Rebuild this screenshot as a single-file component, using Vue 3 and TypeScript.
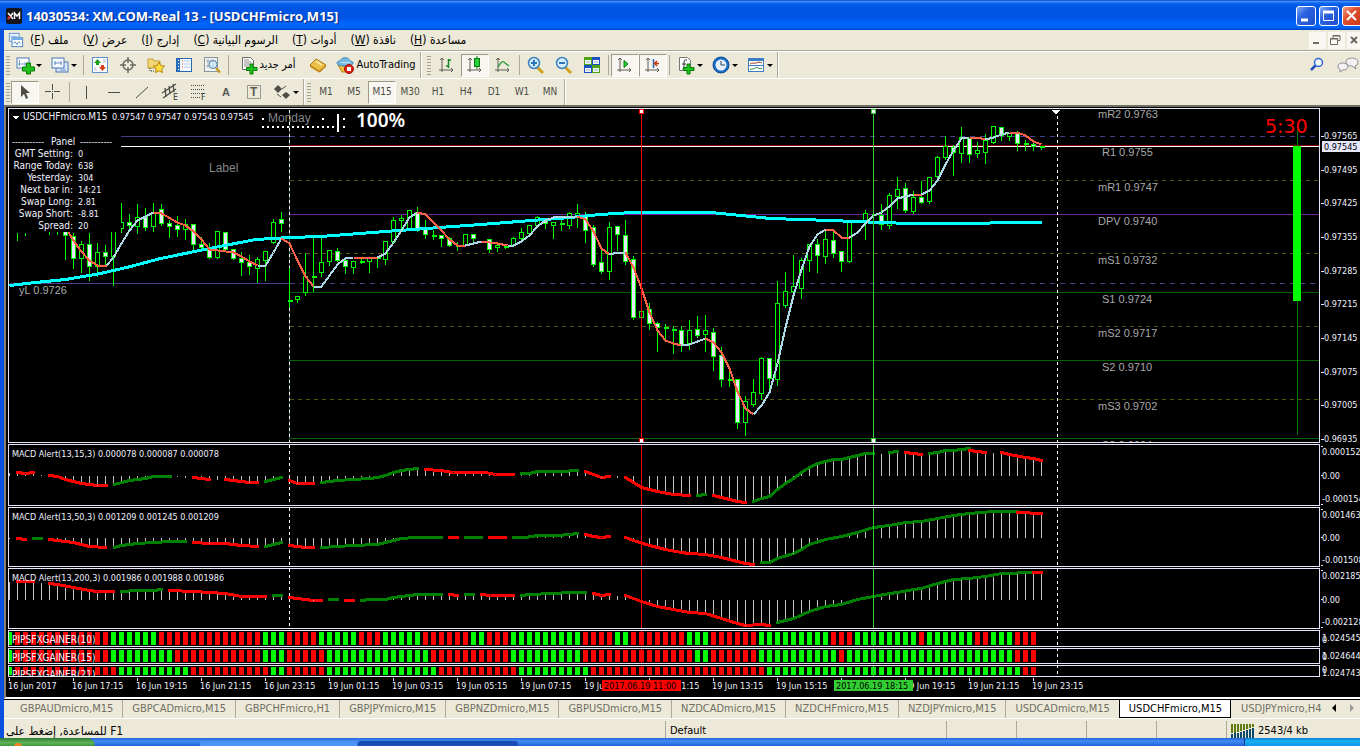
<script setup lang="ts">
import { ref } from 'vue'

type Point = [number, number]
type Seg = { c: string; p: Point[] }

const icons: Record<string, string> = {
  newChart: '<rect x="1" y="2" width="12" height="10" fill="#fff" stroke="#4a78b5"/><path d="M3.500 4v6M2 8h9M9 6v4" stroke="#7c9cc8" fill="none"/><path d="M10.500 7h4v4h4v4h-4v3h-4v-3h-4v-4h4z" fill="#1ec31e" stroke="#087a08"/>',
  profiles: '<rect x="5" y="6" width="12" height="10" fill="#dbe8f8" stroke="#4a78b5"/><rect x="1" y="2" width="12" height="10" fill="#f4f8ff" stroke="#4a78b5"/><path d="M3 7h8M4 5v4M10 5v4M15 14h-6" stroke="#6a8fc4" fill="none"/>',
  market: '<rect x="1.500" y="1.500" width="15" height="15" fill="#fff" stroke="#5a92d0"/><path d="M6.500 3l3.500 4H8v2H5V7H3z" fill="#16a016"/><path d="M11.500 15L8 11h2V9h3v2h2z" fill="#d8411c"/><path d="M3 12h2M3 14h3M12 4h3M12 6h3" stroke="#b0b8c8"/>',
  target: '<circle cx="9" cy="9" r="5" fill="none" stroke="#6b6b63" stroke-width="1.500"/><path d="M9 1v6M9 11v6M1 9h6M11 9h6" stroke="#6b6b63" stroke-width="1.500"/>',
  folder: '<path d="M1 3h5l1 2h6v7H1z" fill="#f3d777" stroke="#c39a33"/><path d="M3 12v3h4" fill="none" stroke="#333" stroke-dasharray="1 1"/><path d="M12 6l1.700 3.600 4 .4-3 2.700.9 4-3.600-2-3.600 2 .9-4-3-2.700 4-.4z" fill="#ffdf3d" stroke="#b78410"/>',
  navigator: '<rect x="1.500" y="2.500" width="15" height="13" fill="#f5f9ff" stroke="#2668b8"/><path d="M2 3h3v12H2z" fill="#2a6cc0"/><path d="M3.500 4v10" stroke="#fff" stroke-dasharray="1 2"/><path d="M7 5h1M7 8h1M7 11h1" stroke="#c43"/><path d="M9 5h6M9 8h6M9 11h6" stroke="#b7cde8"/>',
  tester: '<rect x="1.500" y="1.500" width="13" height="14" fill="#f0f2f2" stroke="#88939b"/><path d="M3 5h10M5 3v9M10 3v9M3 10h8" stroke="#9fb2bf"/><circle cx="10" cy="8.500" r="4" fill="#cde8f8" fill-opacity=".8" stroke="#5682a8"/><path d="M13 12l4 4.500" stroke="#c79a1f" stroke-width="2.500"/>',
  order: '<path d="M2.500 1.500h8l3 3v9h-11z" fill="#fff" stroke="#6c6c6c"/><path d="M4 4h5M4 6h7M4 8h7M4 10h5" stroke="#8c8c8c"/><path d="M10 8h3v3.500h4v3h-4V18h-3v-3.500H6.500v-3H10z" fill="#1ec31e" stroke="#087a08"/>',
  gold: '<path d="M1 9l6-6 10 6-6 7z" fill="#edc04a" stroke="#a97511"/><path d="M1 9l9 5.500L17 9v2l-7 5.500L1 11z" fill="#c78b1b"/><path d="M7 5l6 4" stroke="#ffe9a0" stroke-width="2"/>',
  auto: '<path d="M2 9h13l-4 7H6z" fill="#f2c23c" stroke="#b5851c"/><path d="M1 7c0-2 3-1.500 4-3.500S12 1 13 3.500 17 5 17 7s-3 3-8 3-8-1-8-3z" fill="#73b7e2" stroke="#3d82b6"/><path d="M5 6c2 1 6 1 9 0" stroke="#d4edfb" fill="none"/><circle cx="13" cy="13" r="4.500" fill="#dd2216" stroke="#9e130b"/><rect x="11" y="11" width="4" height="4" fill="#fff"/>',
  bars: '<path d="M4 2v14M1 14h14M2 4l2-2 2 2M13 12l2 2-2 2" stroke="#5c5c54" fill="none"/><path d="M10.500 3v9M8 10h3M10 4h3" stroke="#15842a" stroke-width="1.500" fill="none"/>',
  candles: '<path d="M4 2v14M1 14h14M2 4l2-2 2 2M13 12l2 2-2 2" stroke="#5c5c54" fill="none"/><path d="M11 0v13" stroke="#087a08"/><rect x="8.500" y="2.500" width="5" height="8" fill="#27cc3e" stroke="#087a08"/>',
  line: '<path d="M4 2v14M1 14h14M2 4l2-2 2 2M13 12l2 2-2 2" stroke="#5c5c54" fill="none"/><path d="M4 11c3-5 5-7 7-4l4 3" stroke="#239c35" fill="none" stroke-width="1.300"/>',
  zoomIn: '<path d="M10 11l6 6" stroke="#d0a21c" stroke-width="3"/><circle cx="7" cy="7" r="5.500" fill="#d4ecfb" stroke="#3a7fc0" stroke-width="1.500"/><path d="M7 4v6M4 7h6" stroke="#2877bd" stroke-width="2"/>',
  zoomOut: '<path d="M10 11l6 6" stroke="#d0a21c" stroke-width="3"/><circle cx="7" cy="7" r="5.500" fill="#d4ecfb" stroke="#3a7fc0" stroke-width="1.500"/><path d="M4 7h6" stroke="#2877bd" stroke-width="2"/>',
  tile: '<path d="M1 1h8v8H1zM9 9h8v8H9z" fill="#4ba312"/><path d="M9 1h8v8H9zM1 9h8v8H1z" fill="#1c4fc0"/><path d="M2 4h6v4H2zM10 4h6v4h-6zM2 12h6v4H2zM10 12h6v4h-6z" fill="#eef4f8"/><path d="M3 6h4M11 6h4M3 14h4M11 14h4" stroke="#9bbad0"/>',
  scroll: '<path d="M4 2v14M1 14h14M2 4l2-2 2 2M13 12l2 2-2 2" stroke="#5c5c54" fill="none"/><path d="M8 4.500l4 3.500-4 3.500z" fill="#27cc3e" stroke="#087a08"/>',
  shift: '<path d="M4 2v14M1 14h14M2 4l2-2 2 2M13 12l2 2-2 2" stroke="#5c5c54" fill="none"/><path d="M9.500 3v9" stroke="#2466a8" stroke-width="1.500"/><path d="M15 7.500h-4M13 5l-2.500 2.500L13 10" stroke="#c23a12" stroke-width="1.500" fill="none"/>',
  indicator: '<path d="M2.500 1.500h8l3 3v10h-11z" fill="#fff" stroke="#777"/><path d="M10 4H8.500Q7 4 7 6v6q0 1-1.500 1M5 8h4" stroke="#333" fill="none"/><path d="M10 8h3v3.500h4v3h-4V18h-3v-3.500H6.500v-3H10z" fill="#1ec31e" stroke="#087a08"/>',
  clock: '<circle cx="9" cy="9" r="8" fill="#1d6fc8" stroke="#104a94"/><circle cx="9" cy="9" r="5.500" fill="#e4f1fb"/><path d="M9 5v4h4" stroke="#2b3f55" fill="none"/>',
  template: '<rect x="1.500" y="2.500" width="15" height="13" fill="#fff" stroke="#3b7cc3"/><path d="M2 3h14v2H2zM2 9h14v1H2z" fill="#3b7cc3"/><path d="M3 8c2-2 4 0 6-1s4-1 6 0" stroke="#a53a1d" fill="none"/><path d="M3 14c2-2 3 0 5-2s4 2 7 0" stroke="#228a30" fill="none"/>',
  cursor: '<path d="M5 2v12l3-3 2 5 2-1-2-5h4z" fill="#4d4d46"/>',
  cross: '<path d="M8.500 1v6M8.500 10v6M1 8.500h6M10 8.500h6M8 8.500h1" stroke="#4d4d46"/>',
  vline: '<path d="M9.500 3v13" stroke="#4d4d46"/>',
  hline: '<path d="M3 9.500h12" stroke="#4d4d46"/>',
  trend: '<path d="M3 15L15 4" stroke="#4d4d46"/>',
  channel: '<path d="M1 10L15 1M2 15L15 6M4 5l1 9M8 3l1 8M12 1l1 8" stroke="#4d4d46" fill="none" stroke-width="1.300"/><text x="12" y="17" font-size="8" font-family="DejaVu Sans, sans-serif" fill="#333">E</text>',
  fibo: '<path d="M2 2.500h14M2 6.500h14M2 10.500h14M2 14.500h9" stroke="#4d4d46" stroke-dasharray="1 1"/><text x="12" y="17" font-size="8" font-family="DejaVu Sans, sans-serif" fill="#333">F</text>',
  text: '<text x="5" y="13" font-size="11" font-weight="bold" font-family="Liberation Sans, sans-serif" fill="#5b5b54">A</text>',
  label: '<rect x="2.500" y="2.500" width="13" height="13" fill="none" stroke="#4d4d46" stroke-dasharray="1 1"/><text x="5" y="13" font-size="12" font-weight="bold" font-family="Liberation Sans, sans-serif" fill="#5b5b54">T</text>',
  arrows: '<path d="M5 2l4 4-4 4-4-4zM13 9l4 3-4 4-4-4z" fill="#4d4d46"/><path d="M9 6l4-3M4 11l4 3" stroke="#4d4d46"/>',
  chartMenu: '<rect x="1.500" y="1.500" width="11" height="9" fill="#e9f3ff" stroke="#5a92d0"/><rect x="4.500" y="6.500" width="12" height="10" fill="#fff" stroke="#3b7cc3"/><path d="M5 8h11" stroke="#6aa7e8" stroke-width="2"/><path d="M6 13l2-2 2 3 2-3 2 2" stroke="#3b7cc3" fill="none"/><path d="M3 5h7" stroke="#7fb0e6"/>',
}

const menus = [
  ['ملف', 'F'], ['عرض', 'V'], ['إدارج', 'I'], ['الرسوم البيانية', 'C'],
  ['أدوات', 'T'], ['نافذة', 'W'], ['مساعدة', 'H'],
]

type Tool = { i?: string; caret?: boolean; on?: boolean; name?: string; label?: string; kind?: string }
const mainTools: Tool[] = [
  { kind: 'grip' },
  { i: 'newChart', caret: true, name: 'New chart' }, { i: 'profiles', caret: true, name: 'Profiles' }, { kind: 'sep' },
  { i: 'market', name: 'Market watch' }, { i: 'target', name: 'Data window' }, { i: 'folder', name: 'Navigator' },
  { i: 'navigator', name: 'Terminal' }, { i: 'tester', name: 'Strategy tester' }, { kind: 'sep' },
  { i: 'order', name: 'New order', label: 'أمر جديد', kind: 'order' }, { i: 'gold', name: 'MetaEditor' },
  { i: 'auto', name: 'AutoTrading', label: 'AutoTrading', kind: 'auto' }, { kind: 'end' },
  { kind: 'grip' },
  { i: 'bars', name: 'Bar chart' }, { i: 'candles', name: 'Candlesticks', on: true }, { i: 'line', name: 'Line chart' }, { kind: 'sep' },
  { i: 'zoomIn', name: 'Zoom in' }, { i: 'zoomOut', name: 'Zoom out' }, { i: 'tile', name: 'Tile windows' }, { kind: 'sep' },
  { i: 'scroll', name: 'Auto scroll', on: true }, { i: 'shift', name: 'Chart shift', on: true }, { kind: 'sep' },
  { i: 'indicator', caret: true, name: 'Indicators' }, { i: 'clock', caret: true, name: 'Periods' }, { i: 'template', caret: true, name: 'Templates' },
  { kind: 'end' },
]
const drawTools: Tool[] = [
  { kind: 'grip' },
  { i: 'cursor', name: 'Cursor', on: true }, { i: 'cross', name: 'Crosshair' }, { kind: 'sep' },
  { i: 'vline', name: 'Vertical line' }, { i: 'hline', name: 'Horizontal line' }, { i: 'trend', name: 'Trendline' },
  { i: 'channel', name: 'Channel' }, { i: 'fibo', name: 'Fibonacci' }, { i: 'text', name: 'Text' }, { i: 'label', name: 'Text label' },
  { i: 'arrows', caret: true, name: 'Arrows' },
]
const frames = ['M1', 'M5', 'M15', 'M30', 'H1', 'H4', 'D1', 'W1', 'MN']
const frame = ref('M15')

const tabs = [
  'GBPAUDmicro,M15', 'GBPCADmicro,M15', 'GBPCHFmicro,H1', 'GBPJPYmicro,M15', 'GBPNZDmicro,M15', 'GBPUSDmicro,M15',
  'NZDCADmicro,M15', 'NZDCHFmicro,M15', 'NZDJPYmicro,M15', 'USDCADmicro,M15', 'USDCHFmicro,M15', 'USDJPYmicro,H4',
]
const tab = ref('USDCHFmicro,M15')

/* x, high, low, body top, body bottom, kind (0 hollow, 1 filled, 2 flat, 3 wick only) */
const candles: [number, number, number, number, number, number][] = [
  [17, 232, 239, 233, 233, 3], [25, 232, 234, 233, 233, 3], [49, 231, 233, 232, 232, 3], [57, 231, 233, 232, 232, 3],
  [65, 230, 258, 231, 235, 1], [73, 232, 267, 236, 258, 1], [81, 240, 271, 244, 258, 0], [89, 232, 279, 244, 266, 1],
  [97, 242, 275, 252, 266, 0], [105, 244, 264, 252, 256, 1], [113, 222, 284, 222, 256, 0], [121, 202, 231, 222, 228, 0],
  [129, 213, 229, 222, 225, 1], [137, 203, 232, 217, 226, 0], [145, 207, 229, 217, 227, 1], [153, 202, 230, 212, 226, 0],
  [161, 203, 224, 209, 223, 1], [169, 219, 236, 223, 226, 1], [177, 215, 235, 225, 229, 1], [185, 218, 238, 224, 229, 0],
  [193, 224, 248, 224, 244, 1], [201, 236, 249, 244, 247, 1], [209, 242, 257, 248, 257, 1], [217, 231, 257, 231, 257, 0],
  [225, 232, 250, 232, 249, 1], [233, 249, 258, 249, 258, 1], [241, 251, 274, 258, 262, 1], [249, 254, 273, 262, 266, 1],
  [257, 256, 281, 259, 268, 0], [265, 251, 279, 251, 260, 0], [273, 218, 242, 222, 242, 0], [281, 211, 230, 219, 223, 1],
  [289, 267, 306, 300, 300, 2], [297, 295, 301, 296, 299, 0], [305, 252, 294, 276, 292, 0], [313, 237, 290, 276, 276, 2],
  [321, 237, 275, 262, 272, 0], [329, 249, 264, 250, 261, 0], [337, 247, 260, 251, 260, 1], [345, 259, 272, 260, 266, 1],
  [353, 261, 272, 261, 267, 0], [361, 256, 262, 261, 261, 2], [369, 256, 271, 257, 261, 0], [377, 257, 266, 257, 257, 2],
  [385, 241, 263, 241, 259, 0], [393, 216, 242, 220, 241, 0], [401, 214, 230, 218, 220, 0], [409, 209, 229, 210, 229, 0],
  [417, 206, 230, 212, 230, 1], [425, 219, 237, 229, 234, 1], [433, 229, 238, 235, 235, 2], [441, 234, 245, 235, 238, 1],
  [449, 236, 245, 238, 245, 1], [457, 241, 249, 245, 245, 2], [465, 233, 245, 234, 245, 0], [473, 234, 241, 234, 238, 1],
  [489, 239, 251, 239, 249, 1], [497, 243, 250, 245, 247, 0], [505, 243, 247, 246, 246, 2], [513, 236, 245, 238, 245, 0],
  [521, 227, 238, 232, 238, 0], [529, 225, 233, 225, 233, 0], [537, 215, 225, 217, 225, 0], [545, 217, 227, 219, 223, 1],
  [553, 221, 237, 222, 225, 0], [561, 219, 229, 223, 223, 2], [569, 211, 227, 213, 225, 0], [577, 203, 226, 213, 217, 0],
  [585, 211, 241, 216, 230, 1], [593, 224, 265, 227, 264, 1], [601, 249, 272, 262, 271, 1], [609, 221, 278, 227, 271, 0],
  [617, 226, 249, 226, 234, 1], [625, 219, 263, 235, 261, 1], [633, 255, 318, 259, 317, 1], [641, 311, 317, 311, 317, 0],
  [649, 302, 328, 309, 323, 1], [657, 321, 350, 323, 327, 1], [665, 323, 338, 327, 327, 2], [673, 325, 352, 329, 329, 2],
  [681, 325, 350, 330, 344, 1], [689, 319, 348, 330, 343, 0], [697, 315, 336, 329, 335, 1], [705, 314, 350, 330, 334, 0],
  [713, 327, 369, 332, 356, 1], [721, 346, 385, 355, 379, 1], [729, 367, 385, 379, 379, 2], [737, 379, 427, 379, 422, 1],
  [745, 395, 434, 401, 422, 0], [753, 378, 405, 392, 404, 0], [761, 356, 398, 358, 393, 0], [769, 357, 388, 358, 378, 1],
  [777, 280, 384, 303, 379, 0], [785, 271, 306, 291, 305, 0], [793, 254, 291, 286, 291, 0], [801, 257, 297, 260, 288, 0],
  [809, 244, 270, 244, 260, 0], [817, 238, 271, 244, 255, 1], [825, 229, 262, 239, 256, 0], [833, 228, 256, 240, 253, 1],
  [841, 250, 270, 251, 261, 1], [849, 222, 261, 222, 261, 0], [865, 209, 238, 213, 222, 0], [873, 213, 218, 214, 214, 2],
  [881, 203, 228, 215, 224, 1], [889, 192, 227, 195, 225, 0], [897, 176, 207, 189, 196, 0], [905, 182, 211, 188, 210, 1],
  [913, 190, 212, 197, 211, 0], [921, 180, 202, 197, 202, 1], [929, 176, 202, 177, 201, 0], [937, 155, 177, 157, 176, 0],
  [945, 135, 158, 146, 157, 0], [953, 144, 174, 147, 152, 1], [961, 126, 161, 137, 153, 0], [969, 137, 161, 138, 154, 1],
  [977, 141, 156, 150, 153, 0], [985, 133, 162, 140, 152, 0], [993, 126, 142, 126, 142, 0], [1001, 127, 139, 127, 135, 1],
  [1009, 132, 139, 133, 136, 0], [1017, 130, 149, 133, 143, 1], [1025, 139, 149, 143, 143, 2], [1033, 142, 149, 144, 146, 1],
  [1041, 145, 148, 146, 146, 2],
]

const parse = (s: string): Point[] => s.trim().split(/\s+/).map(q => q.split(',').map(Number) as Point)
const pts = (p: Point[]) => p.map(q => q.join(',')).join(' ')
const seg = (colors: Record<string, string>, rows: string[]): Seg[] =>
  rows.map(r => ({ c: colors[r[0]], p: parse(r.slice(1)) }))

const fastMa = seg({ R: '#ff6347', B: '#add8e6' }, [
  'R 68,232 73,240 80,250 89,260 97,265 106,265', 'B 106,265 113,257 121,243 129,230 137,220 145,216 153,212',
  'R 153,212 161,213 177,222 185,225 193,231 201,239 209,249 217,250 233,252 241,256 249,261 257,265',
  'B 257,265 265,265 273,252 281,238', 'R 281,238 289,243 297,260 305,276 313,286',
  'B 313,286 321,286 329,275 337,264 345,258 353,257', 'R 353,257 377,257', 'B 377,257 385,253 393,242 401,230 409,217 417,212',
  'R 417,212 425,214 433,222 441,230 449,239 457,245 465,245', 'B 465,245 481,241', 'R 481,241 497,243 507,245',
  'B 507,245 513,245 521,241 529,235 537,226 545,220 553,217 577,216', 'R 577,216 585,219 593,231 601,248 609,254',
  'B 609,254 617,252 625,252', 'R 625,252 633,267 641,288 649,312 657,330 665,340 673,343 681,345',
  'B 681,345 689,344 697,341 705,338', 'R 705,338 713,342 721,352 729,368 737,391 745,408 753,414',
  'B 753,414 761,405 769,392 777,363 785,327 793,295 801,269 809,246 817,234 825,229', 'R 825,229 833,230 841,237 849,237',
  'B 849,237 857,232 865,223 873,215 881,212 889,206 897,198 905,196 913,194', 'R 913,194 921,194',
  'B 921,194 929,190 937,180 945,164 953,150 961,138 969,137', 'R 969,137 977,137 985,139',
  'B 985,139 993,137 1001,134 1009,132', 'R 1009,132 1017,132 1025,135 1033,141 1041,144',
])
const slowMa = pts(parse('9,285 35,282 65,279 100,273 130,266 160,258 209,248 255,239 289,237 320,236 385,231 480,224 570,217 600,214 632,212 710,212 740,215 770,218 830,220 880,222 910,223 980,223 1000,222 1041,222'))

const rg = { R: '#ff0000', G: '#008000' }
const macd = [
  {
    top: 444, h: 62, zero: 475, title: 'MACD Alert(13,15,3) 0.000078 0.000087 0.000078', base: 457,
    axis: [['0.000152', 451], ['0.00', 475], ['-0.000154', 498]] as [string, number][],
    segs: seg(rg, ['R 17,472 25,473 33,472', 'R 49,475 57,476 65,479 73,481 81,483 89,484 97,485 106,485',
      'G 114,484 121,482 129,480 137,479 145,478 153,476 170,476', 'R 193,477 201,478 209,479', 'R 225,479 233,480 249,482 257,482',
      'G 265,481 273,479 281,477', 'R 289,480 297,483 313,483', 'G 321,482 337,480 353,479 369,478 377,477 385,475 393,472 401,470 409,469 417,468',
      'R 425,469 440,470 453,472 485,472 495,474 513,474', 'G 521,473 529,473 537,471 561,471 577,470', 'R 585,471 593,474 601,477 609,476',
      'R 625,477 633,482 641,487 657,491 673,494 689,495', 'G 697,495 705,494', 'R 713,495 729,499 737,501 745,502',
      'G 753,501 761,498 769,496 777,489 785,483 793,478 801,472 809,467 817,463 825,461 833,459 841,459 849,457 857,455 865,453 873,453',
      'G 889,452 897,451', 'R 905,452 921,454', 'G 929,453 937,452 945,450 953,450 961,449 969,448', 'R 969,450 985,452',
      'R 1001,452 1009,454 1025,457 1033,458 1041,460']),
  },
  {
    top: 507, h: 60, zero: 537, title: 'MACD Alert(13,50,3) 0.001209 0.001245 0.001209', base: 520,
    axis: [['0.001463', 514], ['0.00', 537], ['-0.001508', 559]] as [string, number][],
    segs: seg(rg, ['R 17,538 25,539', 'G 33,538 41,538', 'R 49,539 57,540 73,542 81,544 89,546 105,547',
      'G 114,547 121,545 137,543 153,542 170,541 185,541', 'R 193,542 209,543 225,543 241,545 257,546', 'G 265,546 273,544 281,542',
      'R 289,545 297,546 305,547 313,547', 'G 321,547 337,546 353,545 377,544 385,542 393,540 401,538 415,537 441,537',
      'R 449,537 457,537', 'G 465,537 481,537', 'R 489,537 505,537', 'G 513,537 525,537 537,535 557,535 569,534 577,533',
      'R 585,534 593,536 601,537 609,536', 'R 625,537 633,540 649,545 665,549 681,552 689,553 705,554 721,557 737,561 745,563 753,564',
      'G 761,562 769,562 777,558 793,553 801,549 809,544 825,539 841,536 857,532 873,527 889,525 905,522 921,521 937,518 953,515 969,513 993,511 1017,511',
      'R 1017,512 1041,513']),
  },
  {
    top: 568, h: 61, zero: 599, title: 'MACD Alert(13,200,3) 0.001986 0.001988 0.001986', base: 581,
    axis: [['0.002185', 575], ['0.00', 599], ['-0.002128', 621]] as [string, number][],
    segs: seg(rg, ['R 17,581 33,581', 'R 49,583 57,584 73,587 89,590 97,591 113,591', 'G 121,591 137,590 153,590 161,589',
      'R 169,590 193,591 209,592 225,593 241,596 265,596', 'G 273,595 281,595', 'R 289,597 305,599 313,600 321,600', 'G 329,599 337,599',
      'R 345,600 353,600', 'G 361,600 369,599 385,599 393,597 409,595 417,594 441,594', 'R 449,594 457,595', 'G 465,594 473,594',
      'R 481,594 490,595 513,595', 'G 521,595 529,594 553,593 569,592 585,592', 'R 593,593 601,595 609,594',
      'R 625,595 641,601 657,606 673,609 689,612 705,613 721,618 737,623 745,625 761,624 769,625',
      'G 777,622 793,618 809,611 825,606 841,604 857,599 873,596 889,593 897,592 913,589 921,588 937,583 953,579 969,578 985,576 1001,573 1033,572',
      'R 1033,572 1041,572']),
  },
]

function histogram(segs: Seg[], zero: number): string {
  const all = segs.flatMap(s => s.p)
  let d = ''
  for (let x = 9; x <= 1041; x += 8) {
    let y = all[0][1]
    for (let i = 1; i < all.length; i++) {
      const [ax, ay] = all[i - 1]
      const [bx, by] = all[i]
      if (x >= ax && x <= bx && bx > ax) y = Math.round(ay + ((by - ay) * (x - ax)) / (bx - ax))
    }
    d += `M${x} ${zero}V${y}`
  }
  return d
}

const expand = (s: string) => {
  const out: { x: number; c: string }[] = []
  let x = 15
  s.split(' ').forEach(r => {
    for (let n = Number(r.slice(1)); n > 0; n--) { out.push({ x, c: r[0] === 'R' ? '#ff0000' : '#00ff00' }); x += 8 }
  })
  return out
}
const gainers = [
  { top: 630, h: 17, y: 632, bh: 13, name: 'PIPSFXGAINER(10)', base: 643, axis: '1.024545', ay: 641, zy: 643,
    bars: expand('R12 G6 R13 G3 R4 G5 R3 G5 R6 G2 R3 G9 R4 G2 R7 G3 R6 G9 R3 G8 R1 G6 R2 G3 R3') },
  { top: 648, h: 16, y: 650, bh: 12, name: 'PIPSFXGAINER(15)', base: 661, axis: '1.024644', ay: 659, zy: 660,
    bars: expand('R12 G8 R11 G3 R5 G13 R10 G9 R14 G2 R6 G10 R1 G21 R3') },
  { top: 665, h: 12, y: 667, bh: 8, name: 'PIPSFXGAINER(21)', base: 678, axis: '1.024743', ay: 676, zy: 673,
    bars: expand('R13 G9 R10 G2 R5 G14 R10 G9 R22 G32 R2') },
]

const pivots: [string, number, number][] = [
  ['mR2 0.9763', 1098, 118], ['R1 0.9755', 1102, 156], ['mR1 0.9747', 1098, 191], ['DPV 0.9740', 1098, 225], ['mS1 0.9732', 1098, 264],
  ['S1 0.9724', 1102, 303], ['mS2 0.9717', 1098, 337], ['S2 0.9710', 1102, 371], ['mS3 0.9702', 1098, 410], ['S3 0.9694', 1102, 449],
]
const levels: [number, string, string][] = [
  [136, '#483d8b', '5 5'], [145, '#8b0000', ''], [180, '#555510', '4 4'], [214, '#71209a', ''], [253, '#555510', '4 4'],
  [283, '#483d8b', '5 5'], [292, '#006400', ''], [326, '#555510', '4 4'], [360, '#006400', ''], [399, '#555510', '4 4'], [438, '#006400', ''],
]
const prices: [string, number][] = [
  ['0.97565', 136], ['0.97495', 170], ['0.97425', 203], ['0.97355', 237], ['0.97285', 271], ['0.97215', 304],
  ['0.97145', 338], ['0.97075', 372], ['0.97005', 405], ['0.96935', 439],
]
const panel: [string, string][] = [
  ['GMT Setting:', '0'], ['Range Today:', '638'], ['Yesterday:', '304'], ['Next bar in:', '14:21'],
  ['Swap Long:', '2.81'], ['Swap Short:', '-8.81'], ['Spread:', '20'],
]
const times = ['16 Jun 2017', '16 Jun 17:15', '16 Jun 19:15', '16 Jun 21:15', '16 Jun 23:15', '19 Jun 01:15', '19 Jun 03:15', '19 Jun 05:15',
  '19 Jun 07:15', '19 Jun 09:15', '19 Jun 11:15', '19 Jun 13:15', '19 Jun 15:15', '19 Jun 17:15', '19 Jun 19:15', '19 Jun 21:15', '19 Jun 23:15']
const origin = (top: number) => `translate(-7.5 ${0.5 - top})`
const axisOrigin = (top: number) => `translate(-1319.5 ${0.5 - top})`
const textOrigin = (left: number, top: number) => `translate(${-left} ${-top})`
</script>

<template>
  <div class="desktop">
    <header class="title">
      <svg class="logo" width="16" height="16" viewBox="0 0 16 16" aria-hidden="true">
        <rect width="16" height="16" rx="2" fill="#15151b" />
        <path d="M2 5l5 6M7 5l-5 6" stroke="#fff" stroke-width="1.500" /><path d="M8.500 11V5l2.500 3 2.500-3v6" stroke="#fff" fill="none" stroke-width="1.500" />
        <path d="M2 11l2-3" stroke="#e3242b" stroke-width="2" />
      </svg>
      <h1>14030534: XM.COM-Real 13 - [USDCHFmicro,M15]</h1>
      <div class="winbtns">
        <button aria-label="Minimize"><svg width="18" height="18"><path d="M4 13h7" stroke="#fff" stroke-width="3" /></svg></button>
        <button aria-label="Maximize"><svg width="18" height="18"><path d="M3.500 4.500h10v9h-10z" stroke="#fff" fill="none" /><path d="M3 5h11" stroke="#fff" stroke-width="3" /></svg></button>
        <button class="close" aria-label="Close"><svg width="18" height="18"><path d="M4 4l9 9M13 4l-9 9" stroke="#fff" stroke-width="2" /></svg></button>
      </div>
    </header>

    <main class="frame">
      <nav class="menu">
        <svg class="menuicon" width="16" height="16" viewBox="0 0 18 18" v-html="icons.chartMenu"></svg>
        <button v-for="m in menus" :key="m[1]" dir="rtl">{{ m[0] }} (<u>{{ m[1] }}</u>)</button>
        <div class="mdi">
          <button aria-label="Minimize chart"><svg width="14" height="14"><path d="M4 10h6" stroke="#6b6b60" stroke-width="2" /></svg></button>
          <button aria-label="Restore chart"><svg width="14" height="14"><path d="M5 5V2.500h7v5h-2M2.500 5.500h7v6h-7zM2 6h8M5 3h7" stroke="#6b6b60" fill="none" /></svg></button>
          <button aria-label="Close chart"><svg width="14" height="14"><path d="M4 4l6 6M10 4l-6 6" stroke="#6b6b60" stroke-width="2" /></svg></button>
        </div>
      </nav>

      <div class="bars">
        <div class="bar first">
          <template v-for="(t, n) in mainTools" :key="n">
            <button v-if="t.i" :class="['tool', t.kind, { wide: t.caret, on: t.on }]" :aria-label="t.name">
              <svg width="18" height="18" viewBox="0 0 18 18" v-html="icons[t.i]"></svg>
              <span v-if="t.label">{{ t.label }}</span>
              <i v-if="t.caret" class="caret"></i>
            </button>
            <span v-else :class="t.kind"></span>
          </template>
          <div class="corner">
            <button aria-label="Search"><svg width="16" height="16"><circle cx="9.500" cy="5.500" r="4" fill="#f4f8ff" stroke="#2f62d0" stroke-width="1.500" /><path d="M6.500 8.500L2 13" stroke="#2450b8" stroke-width="2.500" /></svg></button>
            <button aria-label="Chat"><svg width="22" height="16"><path d="M9 4c1-4 12-4 12 1 0 3-2 4-3 4l1 3-4-3c-4 0-6-2-6-5z" fill="#f2f2f4" stroke="#8b8b93" /><path d="M1 9c0-4 9-4 10 0 0 3-3 4-5 4l-3 2v-3C2 12 1 11 1 9z" fill="#f2f2f4" stroke="#8b8b93" /></svg></button>
          </div>
        </div>
        <div class="bar">
          <template v-for="(t, n) in drawTools" :key="n">
            <button v-if="t.i" :class="['tool', { wide: t.caret, on: t.on }]" :aria-label="t.name">
              <svg width="18" height="18" viewBox="0 0 18 18" v-html="icons[t.i]"></svg>
              <i v-if="t.caret" class="caret"></i>
            </button>
            <span v-else :class="t.kind"></span>
          </template>
          <span class="end"></span><span class="grip"></span>
          <button v-for="f in frames" :key="f" :class="['tool', 'frametool', { on: f === frame }]" @click="frame = f">{{ f }}</button>
          <span class="end"></span>
        </div>
      </div>

      <section class="charts">
        <div class="pane">
          <svg class="plot" height="335">
            <g :transform="origin(108)" class="crisp">
              <path d="M9 136H289M9 283H289" stroke="#483d8b" />
              <svg v-for="l in levels" :key="l[0]" x="289" :y="l[0] - 1" width="100%" height="2" overflow="visible">
                <line x1="0" y1="1" x2="100%" y2="1" :stroke="l[1]" :stroke-dasharray="l[2]" />
              </svg>
              <line x1="9" y1="146" x2="110%" y2="146" stroke="#fff" />
              <path d="M289 109V442" stroke="#2f4f4f" /><path d="M289 109V442" stroke="#fff" stroke-dasharray="3 3" />
              <path d="M1057 109V442" stroke="#fff" stroke-dasharray="3 3" />
              <path d="M1297 126V434" stroke="#008000" /><rect x="1292.500" y="145.500" width="8" height="155" fill="#00ff00" />
            </g>
            <g :transform="origin(108)" class="crisp">
              <template v-for="c in candles" :key="c[0]">
                <path :d="`M${c[0]} ${c[1]}V${c[2] + 1}`" stroke="#00ff00" />
                <path v-if="c[5] === 2" :d="`M${c[0] - 2} ${c[3]}h5`" stroke="#00ff00" stroke-width="2" />
                <rect v-else-if="c[5] < 2" :x="c[0] - 2" :y="c[3]" width="4" :height="c[4] - c[3]" :fill="c[5] ? '#e6e6fa' : '#000'" stroke="#00ff00" />
              </template>
              <rect x="9" y="128" width="111.500" height="103.500" fill="#000" />
              <polyline :points="slowMa" stroke="#00ffff" stroke-width="3" fill="none" />
              <polyline v-for="(s, n) in fastMa" :key="n" :points="pts(s.p)" :stroke="s.c" stroke-width="2" fill="none" />
              <path d="M641 109V442" stroke="#ff0000" /><path d="M873 109V442" stroke="#32cd32" />
              <path d="M639 109h4v4h-4zM639 438h4v4h-4z" fill="#fff" stroke="#ff0000" />
              <path d="M871 109h4v4h-4zM871 438h4v4h-4z" fill="#fff" stroke="#32cd32" />
              <path d="M1051 109h9l-4.500 5z" fill="#fff" />
              <path d="M11 115h9l-4.500 4z" fill="#fff" />
              <path d="M261 126h72" stroke="#fff" stroke-width="2" stroke-dasharray="2 3" />
              <path d="M261 118h2M321 118h2M342 118h2M342 126h2" stroke="#fff" stroke-width="2" /><path d="M337 113V131" stroke="#fff" stroke-width="2" />
            </g>
            <g :transform="textOrigin(8, 108)">
              <text class="t10" x="23" y="120">USDCHFmicro.M15</text><text class="t9" x="112" y="120">0.97547 0.97547 0.97543 0.97545</text>
              <text class="ar12 dim" x="268" y="122">Monday</text><text class="pct" x="356" y="127">100%</text>
              <text class="t9" x="12" y="145">-----------</text><text class="t10" x="51" y="145">Panel</text><text class="t9" x="80" y="145">-----------</text>
              <template v-for="(r, n) in panel" :key="r[0]">
                <text class="t10" x="73" :y="157 + n * 12" text-anchor="end">{{ r[0] }}</text>
                <text class="t9" x="78" :y="157 + n * 12">{{ r[1] }}</text>
              </template>
              <text class="ar12 dim" x="209" y="172">Label</text><text class="ar11" x="19" y="294">yL 0.9726</text>
              <text v-for="p in pivots" :key="p[0]" class="ar11" :x="p[1]" :y="p[2]">{{ p[0] }}</text>
              <text class="count" x="1265" y="133">5:30</text>
            </g>
          </svg>
          <svg class="axis" height="335">
            <g :transform="axisOrigin(108)">
              <path v-for="p in prices" :key="p[0]" :d="`M1320 ${p[1]}h3`" stroke="#e6e6fa" class="crisp" />
              <rect x="1321.500" y="140.500" width="38" height="11" fill="#e6e6fa" />
            </g>
            <g :transform="textOrigin(1320, 108)">
              <text v-for="p in prices" :key="p[0]" class="t9" x="1324" :y="p[1] + 3">{{ p[0] }}</text>
              <text class="t9 dark" x="1324" y="150">0.97545</text>
            </g>
          </svg>
        </div>

        <div v-for="m in macd" :key="m.top" class="pane">
          <svg class="plot" :height="m.h">
            <g :transform="origin(m.top)" class="crisp">
              <path :d="histogram(m.segs, m.zero)" stroke="#c0c0c0" />
              <path :d="`M289 ${m.top}v${m.h}M1057 ${m.top}v${m.h}`" stroke="#fff" stroke-dasharray="3 3" />
              <polyline v-for="(s, n) in m.segs" :key="n" :points="pts(s.p)" :stroke="s.c" stroke-width="3" stroke-linecap="square" fill="none" />
              <path :d="`M641 ${m.top}v${m.h}`" stroke="#ff0000" /><path :d="`M873 ${m.top}v${m.h}`" stroke="#32cd32" />
            </g>
            <text class="t9" x="4" :y="m.base - m.top">{{ m.title }}</text>
          </svg>
          <svg class="axis" :height="m.h">
            <path :transform="axisOrigin(m.top)" :d="`M1320 ${m.zero}h2M1320 ${m.top + 2}h2M1320 ${m.top + m.h - 2}h2`" stroke="#e6e6fa" class="crisp" />
            <g :transform="textOrigin(1320, m.top)">
              <text v-for="a in m.axis" :key="a[0]" class="t9" x="1322" :y="a[1] + 4">{{ a[0] }}</text>
            </g>
          </svg>
        </div>

        <div v-for="g in gainers" :key="g.top" class="pane">
          <svg class="plot" :height="g.h">
            <g :transform="textOrigin(8, g.top)" class="crisp">
              <rect x="9" :y="g.y" width="3" :height="g.bh" fill="#00ff00" />
              <rect v-for="b in g.bars" :key="b.x" :x="b.x" :y="g.y" width="5" :height="g.bh" :fill="b.c" />
              <path :d="`M1057.500 ${g.top}v${g.h}`" stroke="#fff" stroke-dasharray="3 3" />
              <path :d="`M641.500 ${g.top}v${g.h}`" stroke="#ff0000" /><path :d="`M873.500 ${g.top}v${g.h}`" stroke="#32cd32" />
            </g>
            <text class="t10" x="4" :y="g.base - g.top">{{ g.name }}</text>
          </svg>
          <svg class="axis" :height="g.h">
            <text class="t9" x="2" :y="g.ay - g.top">{{ g.axis }}</text><text class="t9" x="2" :y="g.zy - g.top">0</text>
          </svg>
        </div>

        <svg class="times" height="20">
          <path v-for="(t, n) in times" :key="t" transform="translate(-7.5 -676.5)" :d="`M${9 + n * 64} 677v3`" stroke="#e6e6fa" class="crisp" />
          <g :transform="textOrigin(8, 677)">
            <text v-for="(t, n) in times" :key="t" class="t9" :x="8 + n * 64" y="689">{{ t }}</text>
            <rect x="602" y="680" width="79" height="11" fill="#ff0000" /><text class="t9 dark" x="604" y="689">2017.06.19 11:00</text>
            <rect x="834" y="680" width="79" height="11" fill="#32cd32" /><text class="t9 dark" x="836" y="689">2017.06.19 18:15</text>
          </g>
        </svg>
      </section>

      <div class="tabs" role="tablist">
        <button v-for="t in tabs" :key="t" role="tab" :aria-selected="t === tab" :class="{ active: t === tab }" @click="tab = t">{{ t }}</button>
        <div class="scrolls">
          <button aria-label="Scroll tabs left"><svg width="6" height="8"><path d="M5 0v8L1 4z" fill="#000" /></svg></button>
          <button aria-label="Scroll tabs right"><svg width="6" height="8"><path d="M1 0v8l4-4z" fill="#999" /></svg></button>
        </div>
      </div>

      <footer class="status">
        <span class="help">للمساعدة, إضغط على F1</span>
        <span class="profile">Default</span>
        <span class="cell"></span><span class="cell"></span><span class="cell"></span><span class="cell"></span>
        <span class="traffic">
          <svg width="24" height="14"><path d="M1 0v9M4 0v9M7 0v8M10 0v7M13 0v6M16 0v5M19 0v4M22 0v3" stroke="#5f7a0c" stroke-width="2" /><path d="M1 10v4M4 9v5M7 9v5M10 8v6M13 7v7M16 6v8M19 5v9M22 4v10" stroke="#0b4a6a" stroke-width="2" /></svg>
          2543/4 kb
        </span>
      </footer>
    </main>

    <div class="taskbar">
      <span class="start"><i></i></span><span class="task"></span><span class="task deep"></span><span class="tray"></span>
    </div>
  </div>
</template>

<style>
body { margin: 0; background: #fff; }
</style>

<style scoped>
.desktop {
  padding-right: 8px;
  font: 11px/14px "DejaVu Sans Condensed", "DejaVu Sans", sans-serif;
  color: #000;
  overflow: hidden;
}
button { font: inherit; color: inherit; border: 0; background: none; padding: 0; margin: 0; }
.title {
  height: 30px; box-sizing: border-box; display: flex; align-items: center; gap: 4px; padding: 2px 0 0 6px; overflow: hidden;
  background: linear-gradient(#0a46c8 0, #3f8cf8 5%, #0a62ee 12%, #0054e3 25%, #0055e5 60%, #0066ff 80%, #0062f5 92%, #0040c0 100%);
}
.title h1 { margin: 0; flex: 1; color: #fff; font: bold 13px/18px "Open Sans", "DejaVu Sans Condensed", sans-serif; text-shadow: 1px 1px 1px #0a2a80; white-space: nowrap; }
.winbtns { display: flex; gap: 3px; margin-right: -2px; }
.winbtns button { width: 20px; height: 20px; border: 1px solid #fff; border-radius: 3px; background: linear-gradient(135deg, #7fa8f6, #2a62e0 40%, #1f50c8); overflow: hidden; }
.winbtns .close { background: linear-gradient(135deg, #f0a088, #e0502c 40%, #c43a18); }
.winbtns svg, .mdi svg { display: block; }
.frame { background: #ece9d8; border-left: 4px solid #0a50e0; }
.menu { height: 20px; display: flex; align-items: center; padding-left: 4px; gap: 14px; border-bottom: 1px solid #aca899; overflow: hidden; font-size: 12px; }
.menuicon { margin-right: -8px; }
.menu button { white-space: nowrap; }
.mdi { margin-left: auto; display: flex; gap: 2px; margin-right: -4px; }
.mdi button { width: 17px; height: 17px; background: #f8f7f2; }
.bars { border-bottom: 2px solid #716f64; box-shadow: inset 0 1px #fff; padding-top: 1px; }
.bar { display: flex; align-items: center; height: 26px; }
.bar.first { border-bottom: 1px solid #fff; }
.grip { width: 4px; height: 19px; margin: 0 1px 0 2px; background: repeating-linear-gradient(#a7a392 0 1px, #ece9d8 1px 3px); }
.sep { width: 1px; height: 20px; margin: 0 2px; background: #aca899; }
.end { align-self: stretch; width: 1px; background: #aca899; border-right: 1px solid #fff; }
.first .end + .grip { margin: 0 2px 0 5px; }
.tool { width: 28px; height: 23px; display: flex; align-items: center; justify-content: center; box-sizing: border-box; flex: none; }
.tool svg { overflow: visible; flex: none; }
.tool.wide { width: 35px; gap: 2px; }
.tool.order { width: 73px; gap: 2px; }
.tool.auto { width: 88px; gap: 2px; }
.tool.on { background: #f7f6f0; border: 1px solid; border-color: #9d9a8a #fff #fff #9d9a8a; }
.frametool { font-size: 10px; color: #4d4d46; }
.caret { border: 3px solid transparent; border-top-color: #000; border-bottom: 0; }
.corner { margin-left: auto; display: flex; gap: 12px; padding-right: 1px; }
.corner svg { display: block; }
.charts { background: #000; border-left: 2px solid #85826f; padding: 1px 0 0 2px; border-bottom: 2px solid #fff; }
.pane { display: flex; margin-bottom: 1px; }
.plot { flex: 1; min-width: 0; box-sizing: border-box; display: block; outline: 1px solid #e6e6fa; outline-offset: -1px; overflow: hidden; }
.axis { width: 40px; flex: none; display: block; overflow: hidden; }
.times { display: block; width: 100%; margin-top: -1px; }
.crisp { shape-rendering: crispEdges; }
.t9 { font: 9px "DejaVu Sans Condensed", "DejaVu Sans", sans-serif; fill: #f0f0ff; white-space: pre; }
.t10 { font: 10px "DejaVu Sans Condensed", "DejaVu Sans", sans-serif; fill: #f0f0ff; white-space: pre; }
.t9.dark { fill: #000; }
.ar11 { font: 11px "Liberation Sans", Arial, sans-serif; fill: #a9a9a9; }
.ar12 { font: 12px "Liberation Sans", Arial, sans-serif; fill: #a9a9a9; }
.ar12.dim { fill: #868686; }
.pct { font: 600 19px "Noto Sans", sans-serif; fill: #fff; }
.count { font: 19px "DejaVu Sans", sans-serif; fill: #ff0000; }
.tabs { display: flex; height: 20px; border-top: 1px solid #000; padding-left: 6px; box-sizing: border-box; border-bottom: 1px solid #fff; overflow: hidden; }
.tabs > button { flex: none; height: 18px; padding: 0 9px 0 10px; color: #716f64; }
.tabs > button + button { box-shadow: inset 1px 0 #aca899; }
.tabs > .active { background: #fff; color: #000; }
.tabs > button + .active { box-shadow: inset 1px 0 #000, inset -1px 0 #000, inset 0 -1px #000; }
.tabs > .active + button { box-shadow: none; }
.scrolls { margin-left: auto; display: flex; gap: 12px; padding-right: 5px; }
.status { display: flex; height: 19px; align-items: stretch; line-height: 24px; overflow: hidden; white-space: nowrap; }
.help { flex: 1; padding-left: 2px; font-size: 12px; }
.profile, .cell, .traffic { border-left: 1px solid #aca899; box-sizing: border-box; margin-top: 2px; line-height: 20px; }
.profile { width: 281px; padding-left: 4px; }
.cell { width: 70px; }
.traffic { width: 134px; padding-left: 4px; display: flex; gap: 3px; }
.traffic svg { margin-top: 3px; }
.taskbar { height: 8px; display: flex; background: linear-gradient(#2a62d8, #3f8cf3 40%, #245edb); overflow: hidden; }
.start { width: 95px; border-radius: 0 8px 0 0; background: linear-gradient(#2f7a2f, #5fb35a 60%, #3c943c); margin-right: 105px; }
.start i { display: block; width: 8px; height: 6px; margin: 5px 0 0 14px; border-radius: 4px 4px 0 0; background: #f08020; }
.task { width: 157px; margin-top: 3px; border-radius: 3px 3px 0 0; background: #4b93f5; }
.deep { background: #1b4bb5; width: 160px; margin-left: 1px; }
.tray { margin-left: auto; width: 115px; background: linear-gradient(#0e7fd8, #19b0f0 40%, #1290e8); border-left: 1px solid #0a3a8a; }
</style>
